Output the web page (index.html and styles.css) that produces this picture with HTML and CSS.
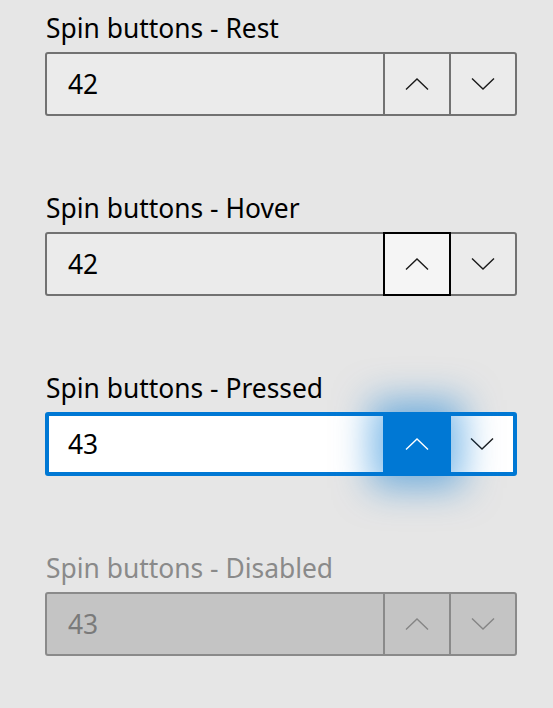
FILE: index.html
```html
<!DOCTYPE html>
<html>
<head>
<meta charset="utf-8">
<link rel="stylesheet" href="styles.css">
</head>
<body>
<div class="page">
  <section class="field">
    <div class="label">Spin buttons - Rest</div>
    <div class="spin">
      <div class="value">42</div>
      <div class="btn up"><svg viewBox="0 0 24 12" class="chev"><path d="M1 11.5 L12 1 L23 11.5"/></svg></div>
      <div class="btn down"><svg viewBox="0 0 24 12" class="chev"><path d="M1 0.5 L12 11 L23 0.5"/></svg></div>
    </div>
  </section>
  <section class="field">
    <div class="label">Spin buttons - Hover</div>
    <div class="spin">
      <div class="value">42</div>
      <div class="btn up hover"><svg viewBox="0 0 24 12" class="chev"><path d="M1 11.5 L12 1 L23 11.5"/></svg></div>
      <div class="btn down"><svg viewBox="0 0 24 12" class="chev"><path d="M1 0.5 L12 11 L23 0.5"/></svg></div>
    </div>
  </section>
  <section class="field">
    <div class="label">Spin buttons - Pressed</div>
    <div class="spin pressed">
      <div class="value">43</div>
      <div class="btn up active"><svg viewBox="0 0 24 12" class="chev"><path d="M1 11.5 L12 1 L23 11.5"/></svg></div>
      <div class="btn down"><svg viewBox="0 0 24 12" class="chev"><path d="M1 0.5 L12 11 L23 0.5"/></svg></div>
    </div>
  </section>
  <section class="field disabled">
    <div class="label">Spin buttons - Disabled</div>
    <div class="spin">
      <div class="value">43</div>
      <div class="btn up"><svg viewBox="0 0 24 12" class="chev"><path d="M1 11.5 L12 1 L23 11.5"/></svg></div>
      <div class="btn down"><svg viewBox="0 0 24 12" class="chev"><path d="M1 0.5 L12 11 L23 0.5"/></svg></div>
    </div>
  </section>
</div>
</body>
</html>
```

FILE: styles.css
```css
html, body {
  margin: 0;
  padding: 0;
  background: #e6e6e6;
}
body {
  font-family: "Noto Sans", "Open Sans", sans-serif;
  color: #000;
}
.page {
  padding: 8px 0 0 45px;
  width: 472px;
  display: flex;
  flex-direction: column;
  gap: 72px;
}
.field {
  display: flex;
  flex-direction: column;
}
.label {
  font-size: 26.4px;
  line-height: 36px;
  height: 36px;
  padding-top: 2px;
  margin-bottom: 6px;
  padding-left: 1px;
}
.spin {
  position: relative;
  height: 64px;
  box-sizing: border-box;
  border: 2px solid #727272;
  border-radius: 3px;
  background: #ebebeb;
  display: flex;
}
.value {
  flex: 1;
  font-size: 26.4px;
  line-height: 60px;
  padding-left: 21px;
}
.btn {
  width: 64px;
  border-left: 2px solid #727272;
  display: flex;
  align-items: center;
  justify-content: center;
  position: relative;
}
.chev {
  width: 24px;
  height: 12px;
  fill: none;
  stroke: #1a1a1a;
  stroke-width: 1.4;
}
.hover {
  background: #f5f5f5;
  border: 2px solid #000;
  margin: -2px 0;
  width: 64px;
}
.hover + .btn {
  border-left: 0;
}
.pressed {
  border: 4px solid #0078d4;
  background: #fff;
}
.pressed .value {
  line-height: 56px;
  padding-left: 19px;
}
.pressed .btn {
  border-left: 0;
}
.pressed .btn.up {
  width: 68px;
  margin: -4px 0;
  background: #0078d4;
  z-index: 1;
  box-shadow: 0 0 36px 12px rgba(0, 120, 212, 0.5);
}
.pressed .btn.down {
  width: 62px;
}
.pressed .btn.up .chev {
  stroke: #fff;
}
.disabled .label {
  color: #8a8a8a;
}
.disabled .spin {
  background: #c4c4c4;
  border-color: #8a8a8a;
}
.disabled .btn {
  border-left-color: #8a8a8a;
}
.disabled .value {
  color: #7a7a7a;
}
.disabled .chev {
  stroke: #858585;
}
```
